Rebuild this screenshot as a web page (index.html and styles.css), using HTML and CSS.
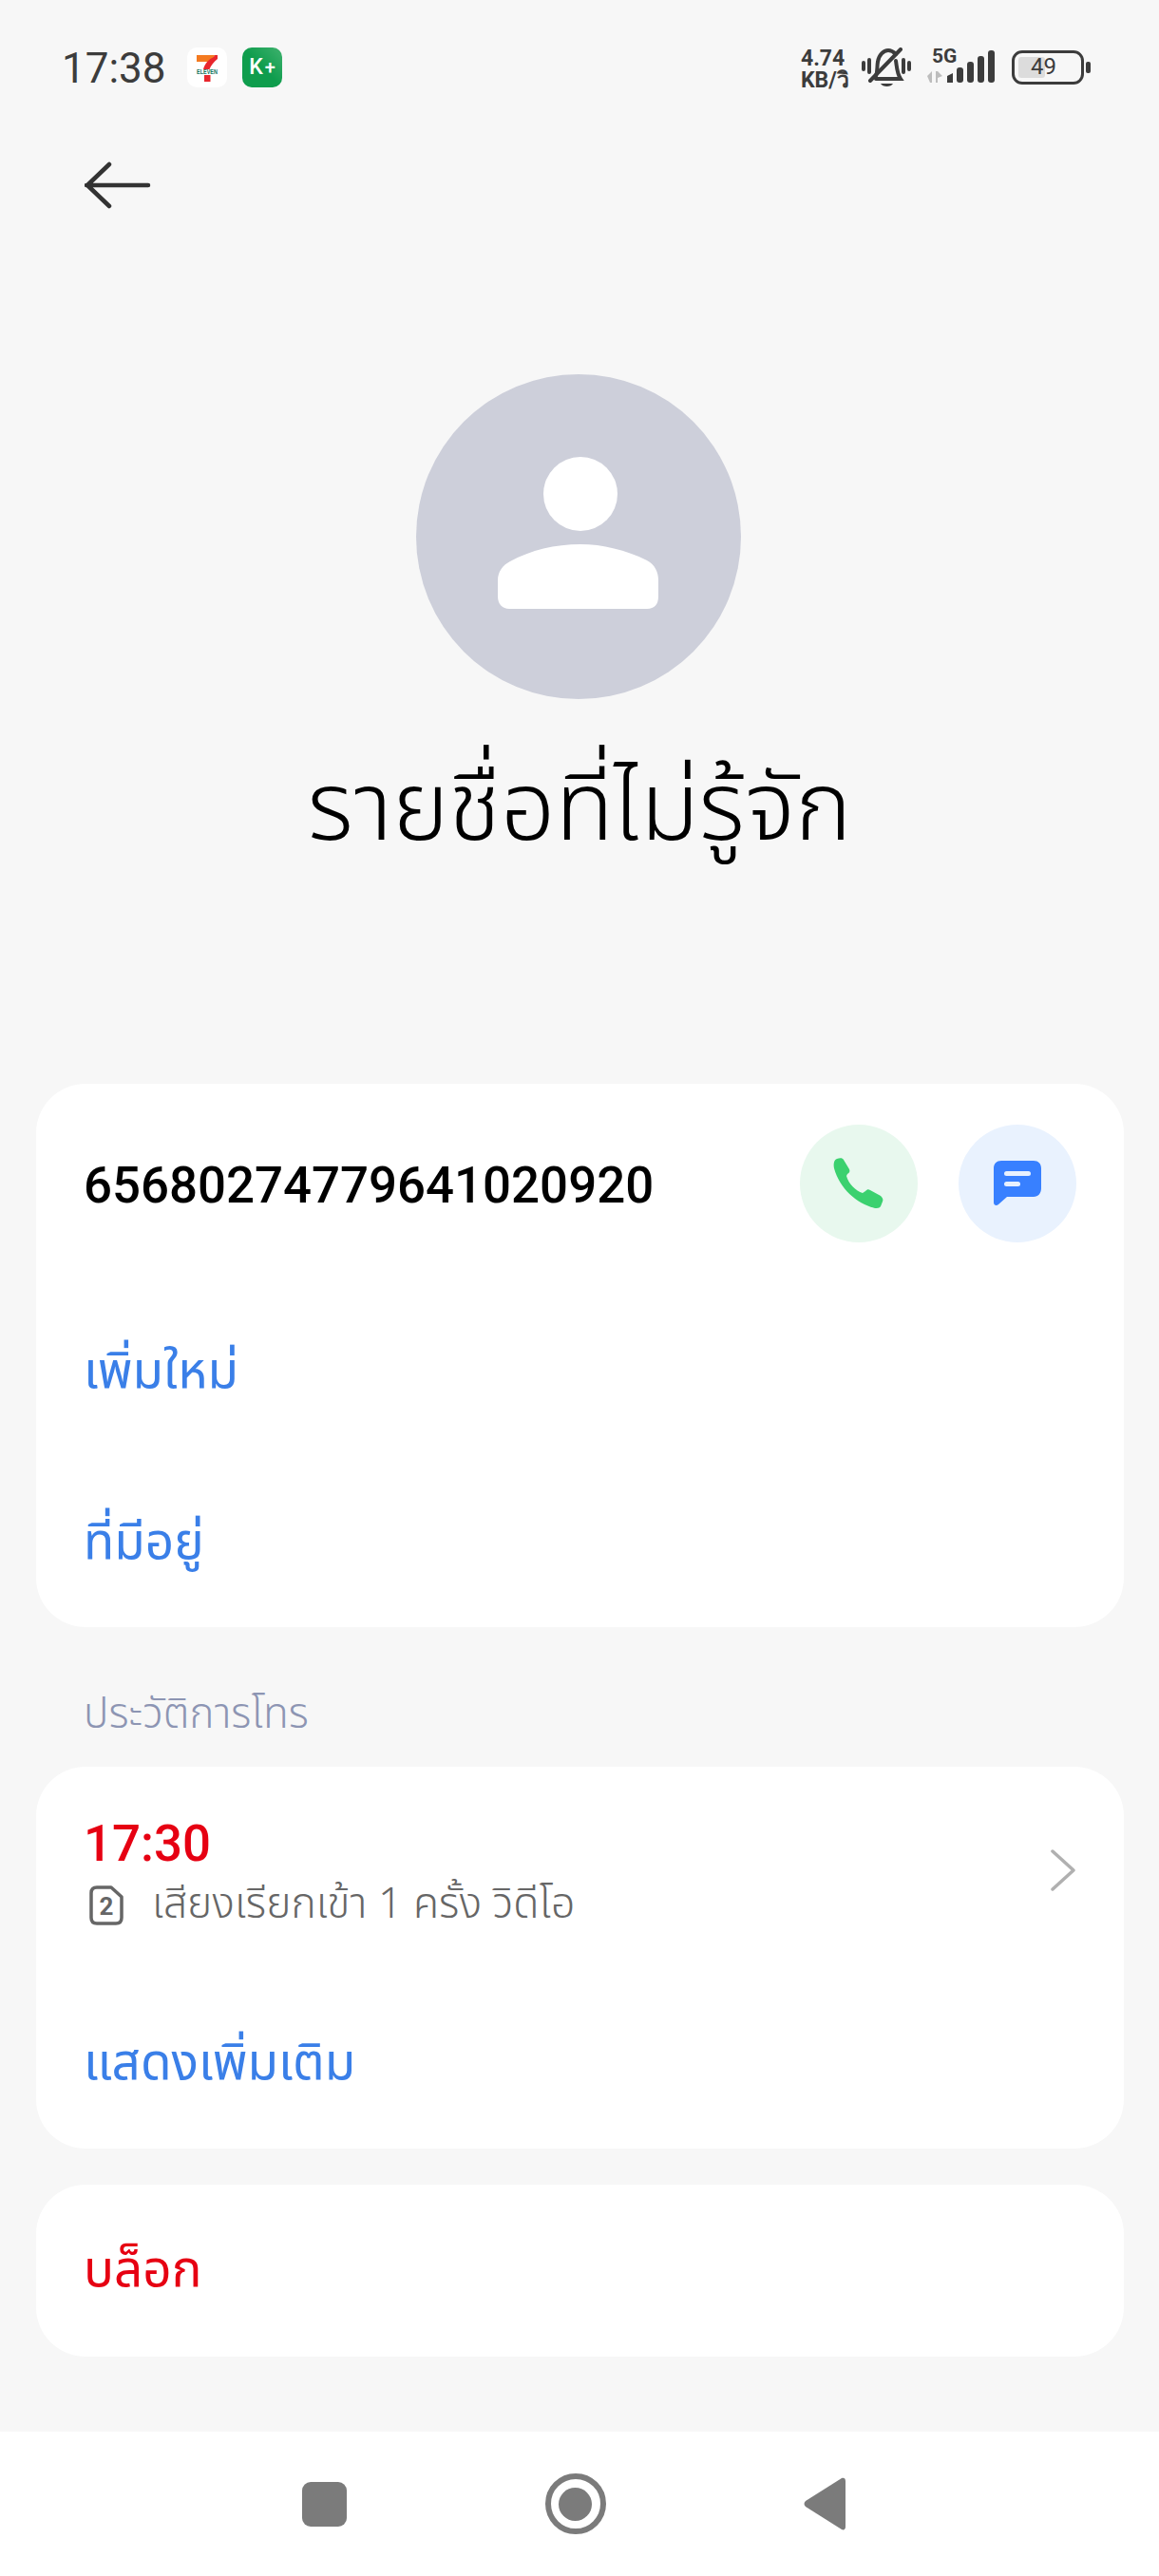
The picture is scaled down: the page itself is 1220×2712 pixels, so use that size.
FILE: index.html
```html
<!DOCTYPE html>
<html lang="th">
<head>
    <meta charset="UTF-8">
    <meta name="viewport" content="width=device-width, initial-scale=1.0">
    <title>รายชื่อที่ไม่รู้จัก</title>
    <link rel="stylesheet" href="styles.css">
</head>
<body>
<div class="page">

    <div class="statusbar">
        <span class="clock">17:38</span>
        <span class="app-icon app-seven">
            <svg width="42" height="42" viewBox="0 0 42 42">
                <path d="M10 8H29L27 15H10Z" fill="#f47a20"/>
                <path d="M29 8H32V12C28 15 25 19 23.500 23H17C18.500 17 23 12 28 10Z" fill="#e8262d"/>
                <path d="M18 29H24.500V36H18Z" fill="#e8262d"/>
                <text x="10" y="28" textLength="22" lengthAdjust="spacingAndGlyphs" class="seven-text">ELEVEN</text>
            </svg>
        </span>
        <span class="app-icon app-kplus">K<b>+</b></span>

        <div class="status-right">
            <div class="netspeed">4.74<br>KB/วิ</div>
            <svg class="bell" width="52" height="43" viewBox="0 0 52 43">
                <g fill="none" stroke="#3c3c3c" stroke-width="4" stroke-linecap="round">
                    <path d="M2 16V23M8 13V26M44 13V26M50 16V23"/>
                    <path d="M15 30C17 25 16 20 17 15C18 8 23 3 28 3C31 3 33 4 36 7"/>
                    <path d="M36 14C37 20 37 27 41 33H15"/>
                    <path d="M9 35L41 2"/>
                </g>
                <path d="M20 38H33C31 42 22 42 20 38Z" fill="#3c3c3c"/>
            </svg>
            <div class="signal">
                <span class="five-g">5G</span>
                <svg width="74" height="36" viewBox="0 0 74 36">
                    <path d="M1 28L6 23V35H4ZM10 35V23H12L17 28L12 30V35Z" fill="#bdbdbd"/>
                    <g fill="#3c3c3c">
                        <path d="M22 28L28 25V35H22Z"/>
                        <rect x="32" y="19" width="7" height="16" rx="3"/>
                        <rect x="43" y="13" width="7" height="22" rx="3"/>
                        <rect x="54" y="7" width="7" height="28" rx="3"/>
                        <rect x="65" y="1" width="7" height="34" rx="3"/>
                    </g>
                </svg>
            </div>
            <div class="battery">
                <div class="battery-body">
                    <div class="battery-fill"></div>
                    <span class="battery-num">49</span>
                </div>
                <div class="battery-nub"></div>
            </div>
        </div>
    </div>

    <div class="topbar">
        <svg width="70" height="50" viewBox="0 0 70 50">
            <path d="M2 25H67M26 3L3 25L26 47" fill="none" stroke="#333" stroke-width="4.500" stroke-linecap="round" stroke-linejoin="round"/>
        </svg>
    </div>

    <div class="profile">
        <div class="avatar">
            <svg width="170" height="160" viewBox="0 0 170 160">
                <circle cx="87" cy="39" r="39" fill="#fff"/>
                <path d="M13 110C35 98 60 92 87 92C110 92 135 98 157 109C165 113 169 121 169 130V147C169 155 165 160 157 160H12C5 160 0 155 0 147V130C0 121 5 114 13 110Z" fill="#fff"/>
            </svg>
        </div>
        <h1 class="name">รายชื่อที่ไม่รู้จัก</h1>
    </div>

    <div class="card card-number">
        <div class="number-row">
            <span class="number">65680274779641020920</span>
            <div class="round-btn round-call">
                <svg width="54" height="54" viewBox="0 0 54 54">
                    <path d="M4 1C7 0 10 0 11 2L17 12C18 14 17 16 15 17L14 19C16 27 24 35 31 37L34 35C36 33 37 33 39 34L50 40C52 42 53 44 52 46L50 51C49 53 46 53 44 53C24 48 7 32 1 11C0 6 1 2 4 1Z" fill="#3bd16f"/>
                </svg>
            </div>
            <div class="round-btn round-msg">
                <svg width="50" height="48" viewBox="0 0 50 48">
                    <path d="M8 0H42C47 0 50 3 50 8V29C50 34 47 38 42 38H14L5 46C3 48 0 47 0 44V8C0 3 3 0 8 0Z" fill="#3880ff"/>
                    <rect x="11" y="11" width="28" height="5" rx="2.500" fill="#e8f1fe"/>
                    <rect x="11" y="22" width="17" height="5" rx="2.500" fill="#e8f1fe"/>
                </svg>
            </div>
        </div>
        <div class="link-row">เพิ่มใหม่</div>
        <div class="link-row">ที่มีอยู่</div>
    </div>

    <div class="section-title">ประวัติการโทร</div>

    <div class="card card-history">
        <div class="call-row">
            <div class="call-info">
                <div class="call-time">17:30</div>
                <div class="call-detail">
                    <svg width="36" height="42" viewBox="0 0 36 42">
                        <path d="M8 2H23L34 12V34C34 38 32 40 28 40H8C4 40 2 38 2 34V8C2 4 4 2 8 2Z" fill="none" stroke="#666" stroke-width="3.500" stroke-linejoin="round"/>
                        <text x="18" y="31" text-anchor="middle" class="sim-num">2</text>
                    </svg>
                    <span>เสียงเรียกเข้า 1 ครั้ง วิดีโอ</span>
                </div>
            </div>
            <svg class="chevron" width="28" height="44" viewBox="0 0 28 44">
                <path d="M3 2L25 22L3 42" fill="none" stroke="#b0b0b0" stroke-width="3.500" stroke-linecap="round" stroke-linejoin="round"/>
            </svg>
        </div>
        <div class="link-row more-row">แสดงเพิ่มเติม</div>
    </div>

    <div class="card card-block">
        <span class="block-text">บล็อก</span>
    </div>

    <div class="navbar">
        <div class="nav-square"></div>
        <div class="nav-ring"><div class="nav-dot"></div></div>
        <svg width="44" height="56" viewBox="0 0 44 56">
            <path d="M40 1C42 0 44 1 44 4V52C44 55 42 56 40 55L2 31C0 29 0 27 2 25Z" fill="#7b7b7b"/>
        </svg>
    </div>

</div>
</body>
</html>
```

FILE: styles.css
```css
* {
    box-sizing: border-box;
}

body {
    margin: 0;
    background-color: #f7f7f7;
    font-family: 'Noto Sans Thai', 'Noto Sans', Roboto, sans-serif;
}

.page {
    width: 1220px;
    height: 2712px;
    display: flex;
    flex-direction: column;
    overflow: hidden;
}

/* status bar */
.statusbar {
    height: 143px;
    padding: 50px 72px 0 65px;
    display: flex;
    align-items: flex-start;
}

.clock {
    font-family: Roboto, sans-serif;
    font-size: 44px;
    line-height: 44px;
    color: #3c3c3c;
    width: 132px;
}

.app-icon {
    width: 42px;
    height: 42px;
    border-radius: 10px;
    display: block;
}

.app-seven {
    background: #fff;
    margin-right: 16px;
}

.seven-text {
    font-family: 'Liberation Sans', sans-serif;
    font-size: 7px;
    font-weight: bold;
    fill: #11725c;
}

.app-kplus {
    background: linear-gradient(45deg, #0f9d4d 50%, #3fb26e);
    color: #fff;
    font-family: Roboto, sans-serif;
    font-size: 23px;
    font-weight: 500;
    line-height: 42px;
    text-align: center;
}

.app-kplus b {
    font-weight: 500;
    font-size: 20px;
    margin-left: 2px;
}

.status-right {
    margin-left: auto;
    display: flex;
    align-items: flex-start;
}

.netspeed {
    font-family: Roboto, sans-serif;
    font-weight: 700;
    font-size: 23px;
    line-height: 23px;
    color: #3c3c3c;
    width: 64px;
}

.bell {
    margin-right: 16px;
}

.signal {
    width: 74px;
    position: relative;
    margin-right: 16px;
}

.signal svg {
    display: block;
    margin-top: 2px;
}

.five-g {
    position: absolute;
    left: 6px;
    top: -1px;
    font-family: Roboto, sans-serif;
    font-weight: 700;
    font-size: 21px;
    line-height: 20px;
    color: #3c3c3c;
}

.battery {
    display: flex;
    align-items: center;
    margin-top: 3px;
}

.battery-body {
    width: 76px;
    height: 36px;
    border: 3.500px solid #3c3c3c;
    border-radius: 11px;
    position: relative;
    padding: 4px;
}

.battery-fill {
    width: 28px;
    height: 100%;
    background: #dcdcdc;
    border-radius: 3px;
}

.battery-num {
    position: absolute;
    left: 17px;
    top: 1px;
    font-family: Roboto, sans-serif;
    font-size: 24px;
    line-height: 27px;
    color: #3c3c3c;
}

.battery-nub {
    width: 5px;
    height: 12px;
    margin-left: 2px;
    background: #3c3c3c;
    border-radius: 2px;
}

/* header */
.topbar {
    height: 251px;
    padding: 27px 0 0 89px;
}

.profile {
    display: flex;
    flex-direction: column;
    align-items: center;
    height: 747px;
}

.avatar {
    width: 342px;
    height: 342px;
    margin-left: -2px;
    border-radius: 50%;
    background: #cdcfda;
    display: flex;
    align-items: center;
    justify-content: center;
    padding-bottom: 8px;
}

.name {
    margin: 52px 0 0;
    font-size: 101px;
    line-height: 130px;
    font-weight: 300;
    color: #000;
}

/* cards */
.card {
    margin: 0 37px 0 38px;
    background: #fff;
    border-radius: 52px;
    padding: 0 50px;
}

.card-number {
    height: 572px;
}

.number-row {
    height: 214px;
    padding-top: 43px;
    display: flex;
    align-items: flex-start;
}

.number {
    flex: 1;
    font-family: Roboto, sans-serif;
    font-weight: 500;
    font-size: 52.800px;
    line-height: 128px;
    color: #000;
}

.round-btn {
    width: 124px;
    height: 124px;
    border-radius: 50%;
    display: flex;
    align-items: center;
    justify-content: center;
}

.round-call {
    background: #e8f8ee;
    margin-right: 43px;
}

.round-msg {
    background: #e9f2fe;
}

.link-row {
    height: 180px;
    display: flex;
    align-items: center;
    font-size: 53px;
    color: #3a7fe8;
}

.section-title {
    height: 147px;
    padding: 66px 0 0 88px;
    font-size: 44px;
    line-height: 54px;
    font-weight: 300;
    color: #8d95b3;
}

.card-history {
    height: 402px;
    margin-bottom: 38px;
}

.call-row {
    display: flex;
    align-items: center;
    justify-content: space-between;
    padding-top: 50px;
}

.call-time {
    font-family: Roboto, sans-serif;
    font-weight: 500;
    font-size: 52.800px;
    line-height: 62px;
    color: #e60012;
}

.call-detail {
    display: flex;
    align-items: center;
    gap: 30px;
    margin: 6px 0 0 6px;
    font-size: 44.500px;
    line-height: 56px;
    font-weight: 300;
    color: #666;
}

.sim-num {
    font-family: Roboto, sans-serif;
    font-weight: 700;
    font-size: 26px;
    fill: #666;
}

.chevron {
    margin-bottom: 6px;
}

.more-row {
    height: 150px;
    margin-top: 64px;
}

.card-block {
    height: 181px;
    display: flex;
    align-items: center;
}

.block-text {
    font-size: 53px;
    color: #e60012;
}

/* navigation bar */
.navbar {
    margin-top: auto;
    height: 152px;
    background: #fff;
    padding: 0 330px 0 318px;
    display: flex;
    align-items: center;
    justify-content: space-between;
}

.nav-square {
    width: 47px;
    height: 47px;
    border-radius: 9px;
    background: #7b7b7b;
}

.nav-ring {
    width: 64px;
    height: 64px;
    border-radius: 50%;
    border: 6px solid #7b7b7b;
    display: flex;
    align-items: center;
    justify-content: center;
}

.nav-dot {
    width: 35px;
    height: 35px;
    border-radius: 50%;
    background: #7b7b7b;
}
```
